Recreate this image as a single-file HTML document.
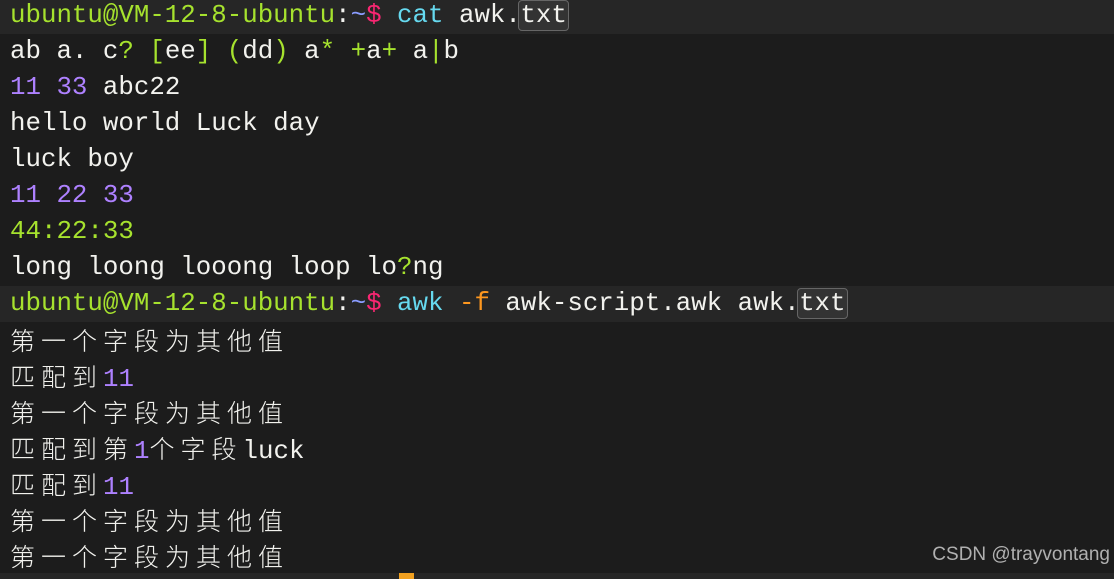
<!DOCTYPE html>
<html><head><meta charset="utf-8"><style>
html,body{margin:0;padding:0;background:#1c1c1c;width:1114px;height:579px;overflow:hidden}
.t{position:absolute;left:10px;top:-2px;font-family:"Liberation Mono","Noto Sans CJK SC",monospace;font-size:25.8px;color:#f2f2ee}
.r{height:36px;line-height:36px;position:relative;white-space:pre}
.p{background:#262626;margin-left:-10px;padding-left:10px;width:1104px}
.g{color:#a6e22e}.c{color:#66d9ef}.k{color:#f92672}.v{color:#ae81ff}.b{color:#8a9cff}.o{color:#fd971f}
.z{font-size:25px;letter-spacing:6px;font-family:"Noto Sans CJK SC",sans-serif;font-weight:300}
.box{border:1.5px solid #666;border-radius:4px;background:#333;padding:0 1px;margin:0 -2.5px}
.wm{position:absolute;right:4px;top:544px;font-family:"Liberation Sans",sans-serif;font-size:19px;color:#b0b0b0}
.bar{position:absolute;left:0;top:573px;width:1114px;height:6px;background:#262626}
.cur{position:absolute;left:399px;top:573px;width:15px;height:6px;background:#f0a020}
</style></head><body>
<div class="t"><div class="r p"><span class="g">ubuntu@VM-12-8-ubuntu</span>:<span class="b">~</span><span class="k">$</span> <span class="c">cat</span> awk.<span class="box">txt</span></div><div class="r">ab a. c<span class="g">?</span> <span class="g">[</span>ee<span class="g">]</span> <span class="g">(</span>dd<span class="g">)</span> a<span class="g">*</span> <span class="g">+</span>a<span class="g">+</span> a<span class="g">|</span>b</div><div class="r"><span class="v">11</span> <span class="v">33</span> abc22</div><div class="r">hello world Luck day</div><div class="r">luck boy</div><div class="r"><span class="v">11</span> <span class="v">22</span> <span class="v">33</span></div><div class="r"><span class="g">44:22:33</span></div><div class="r">long loong looong loop lo<span class="g">?</span>ng</div><div class="r p"><span class="g">ubuntu@VM-12-8-ubuntu</span>:<span class="b">~</span><span class="k">$</span> <span class="c">awk</span> <span class="o">-f</span> awk-script.awk awk.<span class="box">txt</span></div><div class="r"><span class="z">第一个字段为其他值</span></div><div class="r"><span class="z">匹配到</span><span class="v">11</span></div><div class="r"><span class="z">第一个字段为其他值</span></div><div class="r"><span class="z">匹配到第</span><span class="v">1</span><span class="z">个字段</span>luck</div><div class="r"><span class="z">匹配到</span><span class="v">11</span></div><div class="r"><span class="z">第一个字段为其他值</span></div><div class="r"><span class="z">第一个字段为其他值</span></div></div>
<div class="bar"></div><div class="cur"></div>
<div class="wm">CSDN @trayvontang</div>
</body></html>
